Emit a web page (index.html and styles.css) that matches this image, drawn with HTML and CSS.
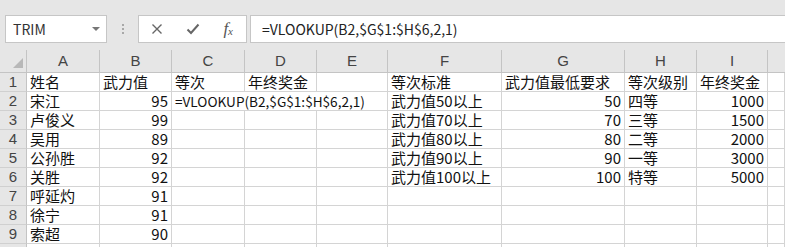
FILE: index.html
```html
<!DOCTYPE html>
<html lang="zh">
<head>
<meta charset="utf-8">
<link rel="stylesheet" href="styles.css">
</head>
<body>
<div class="toolbar">
  <div class="namebox"><span>TRIM</span><span class="caret"></span></div>
  <div class="grip"><span></span><span></span><span></span></div>
  <div class="fxbtns">
    <svg class="ico" width="12" height="12" viewBox="0 0 12 12"><path d="M1.5 1.5L10.5 10.5M10.5 1.5L1.5 10.5" stroke="#666" stroke-width="1.4" fill="none"/></svg>
    <svg class="ico" width="14" height="12" viewBox="0 0 14 12"><path d="M1.5 6.5L5 10L12.5 1.5" stroke="#666" stroke-width="2" fill="none"/></svg>
    <span class="fx">f<sub>x</sub></span>
  </div>
  <div class="formula">=VLOOKUP(B2,$G$1:$H$6,2,1)</div>
</div>
<div class="sheet">
  <div class="ch corner"><span class="tri"></span></div>
  <div class="ch">A</div><div class="ch">B</div><div class="ch">C</div><div class="ch">D</div><div class="ch">E</div><div class="ch">F</div><div class="ch">G</div><div class="ch">H</div><div class="ch">I</div><div class="ch last"></div>

  <div class="rh">1</div><div class="c">姓名</div><div class="c">武力值</div><div class="c">等次</div><div class="c">年终奖金</div><div class="c"></div><div class="c">等次标准</div><div class="c">武力值最低要求</div><div class="c">等次级别</div><div class="c">年终奖金</div><div class="c"></div>

  <div class="rh">2</div><div class="c">宋江</div><div class="c r">95</div><div class="c span3 f">=VLOOKUP(B2,$G$1:$H$6,2,1)</div><div class="c">武力值50以上</div><div class="c r">50</div><div class="c">四等</div><div class="c r">1000</div><div class="c"></div>

  <div class="rh">3</div><div class="c">卢俊义</div><div class="c r">99</div><div class="c"></div><div class="c"></div><div class="c"></div><div class="c">武力值70以上</div><div class="c r">70</div><div class="c">三等</div><div class="c r">1500</div><div class="c"></div>

  <div class="rh">4</div><div class="c">吴用</div><div class="c r">89</div><div class="c"></div><div class="c"></div><div class="c"></div><div class="c">武力值80以上</div><div class="c r">80</div><div class="c">二等</div><div class="c r">2000</div><div class="c"></div>

  <div class="rh">5</div><div class="c">公孙胜</div><div class="c r">92</div><div class="c"></div><div class="c"></div><div class="c"></div><div class="c">武力值90以上</div><div class="c r">90</div><div class="c">一等</div><div class="c r">3000</div><div class="c"></div>

  <div class="rh">6</div><div class="c">关胜</div><div class="c r">92</div><div class="c"></div><div class="c"></div><div class="c"></div><div class="c">武力值100以上</div><div class="c r">100</div><div class="c">特等</div><div class="c r">5000</div><div class="c"></div>

  <div class="rh">7</div><div class="c">呼延灼</div><div class="c r">91</div><div class="c"></div><div class="c"></div><div class="c"></div><div class="c"></div><div class="c"></div><div class="c"></div><div class="c"></div><div class="c"></div>

  <div class="rh">8</div><div class="c">徐宁</div><div class="c r">91</div><div class="c"></div><div class="c"></div><div class="c"></div><div class="c"></div><div class="c"></div><div class="c"></div><div class="c"></div><div class="c"></div>

  <div class="rh">9</div><div class="c">索超</div><div class="c r">90</div><div class="c"></div><div class="c"></div><div class="c"></div><div class="c"></div><div class="c"></div><div class="c"></div><div class="c"></div><div class="c"></div>

  <div class="rh"></div><div class="c"></div><div class="c"></div><div class="c"></div><div class="c"></div><div class="c"></div><div class="c"></div><div class="c"></div><div class="c"></div><div class="c"></div><div class="c"></div>
</div>
</body>
</html>
```
FILE: styles.css
```css
html, body {
  margin: 0;
  padding: 0;
  width: 785px;
  height: 247px;
  overflow: hidden;
  background: #fff;
  font-family: "Noto Sans CJK SC", "Liberation Sans", sans-serif;
  color: #111;
}

.toolbar {
  height: 50px;
  box-sizing: border-box;
  background: #e6e6e6;
  display: flex;
  align-items: flex-start;
  padding: 15px 0 0 5px;
}

.namebox {
  width: 102px;
  height: 28px;
  box-sizing: border-box;
  background: #fff;
  border: 1px solid #c6c6c6;
  display: flex;
  align-items: center;
  justify-content: space-between;
  padding: 0 6px 0 7px;
  font-size: 14px;
  color: #333;
}

.caret {
  width: 0;
  height: 0;
  border-left: 4px solid transparent;
  border-right: 4px solid transparent;
  border-top: 4px solid #777;
}

.grip {
  width: 31px;
  height: 28px;
  display: flex;
  flex-direction: column;
  align-items: center;
  justify-content: center;
  gap: 2px;
}

.grip span {
  width: 2px;
  height: 2px;
  background: #a8a8a8;
}

.fxbtns {
  width: 109px;
  height: 28px;
  box-sizing: border-box;
  background: #fff;
  border: 1px solid #c6c6c6;
  display: flex;
  align-items: center;
  justify-content: space-between;
  padding: 0 13px 0 12px;
}

.fx {
  font-family: "Liberation Serif", serif;
  font-style: italic;
  font-size: 17px;
  color: #555;
}

.fx sub {
  font-size: 11px;
  vertical-align: baseline;
  position: relative;
  top: 1px;
}

.formula {
  flex: 1;
  margin-left: 3px;
  height: 28px;
  box-sizing: border-box;
  background: #fff;
  border: 1px solid #c6c6c6;
  border-right: none;
  display: flex;
  align-items: center;
  padding-left: 11px;
  font-size: 14px;
  color: #222;
}

.sheet {
  display: grid;
  grid-template-columns: 27px 73px 72px 73px 72px 71px 114px 123px 72px 71px 17px;
  grid-template-rows: 23px;
  grid-auto-rows: 19px;
  font-size: 15px;
}

.ch {
  background: #e6e6e6;
  border-right: 1px solid #c4c4c4;
  border-bottom: 1px solid #c4c4c4;
  box-sizing: border-box;
  text-align: center;
  font-family: "Liberation Sans", sans-serif;
  font-size: 15px;
  color: #444;
  line-height: 22px;
}

.ch.last { border-right: none; }

.corner {
  position: relative;
}

.tri {
  position: absolute;
  right: 3px;
  bottom: 4px;
  width: 0;
  height: 0;
  border-left: 10px solid transparent;
  border-bottom: 10px solid #b8b8b8;
}

.rh {
  background: #e6e6e6;
  border-right: 1px solid #c4c4c4;
  border-bottom: 1px solid #d0d0d0;
  box-sizing: border-box;
  text-align: center;
  font-family: "Liberation Sans", sans-serif;
  font-size: 15px;
  color: #444;
  line-height: 18px;
}

.c {
  border-right: 1px solid #d4d4d4;
  border-bottom: 1px solid #d4d4d4;
  box-sizing: border-box;
  padding: 0 3px;
  line-height: 18px;
  white-space: nowrap;
}

.r { text-align: right; }

.f { font-size: 13.6px; }

.span3 { grid-column: span 3; }
```
